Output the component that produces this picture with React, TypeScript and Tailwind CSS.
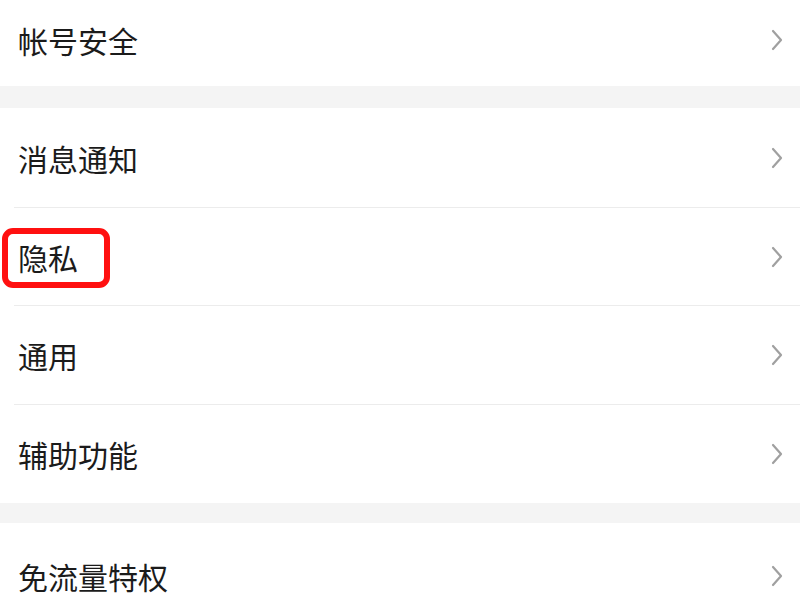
import React from "react";

const Chevron = () => (
  <svg width="14" height="22" viewBox="0 0 14 22" className="mr-[16px]">
    <polyline points="3,2 11,11 3,20" fill="none" stroke="#a0a0a0" strokeWidth="2.2" strokeLinecap="round" strokeLinejoin="round" />
  </svg>
);

function Row({ label, h, divider, highlight }: { label: string; h: string; divider?: boolean; highlight?: boolean }) {
  return (
    <div className="relative bg-white">
      <div className={`flex items-center justify-between ${h}`}>
        <span className="pl-[18px] text-[30px] leading-none text-[#1b1b1b] font-normal" style={{ fontFamily: '"Noto Sans CJK SC", "Noto Sans", sans-serif' }}>
          {label}
        </span>
        <Chevron />
      </div>
      {divider && <div className="ml-[14px] h-px bg-[#ececec]" />}
      {highlight && (
        <div className="absolute left-[2px] top-[20px] h-[60px] w-[108px] rounded-[11px] border-[6px] border-solid border-[#ff1010]" />
      )}
    </div>
  );
}

export default function App() {
  return (
    <div className="w-[800px] h-[600px] overflow-hidden bg-white">
      <div className="pb-[6px] bg-white">
        <Row label="帐号安全" h="h-[80px]" />
      </div>
      <div className="h-[22px] bg-[#f4f4f4]" />
      <Row label="消息通知" h="h-[99px]" divider />
      <Row label="隐私" h="h-[97px]" divider highlight />
      <Row label="通用" h="h-[98px]" divider />
      <Row label="辅助功能" h="h-[98px]" />
      <div className="h-[20px] bg-[#f4f4f4]" />
      <Row label="免流量特权" h="h-[106px]" />
    </div>
  );
}
